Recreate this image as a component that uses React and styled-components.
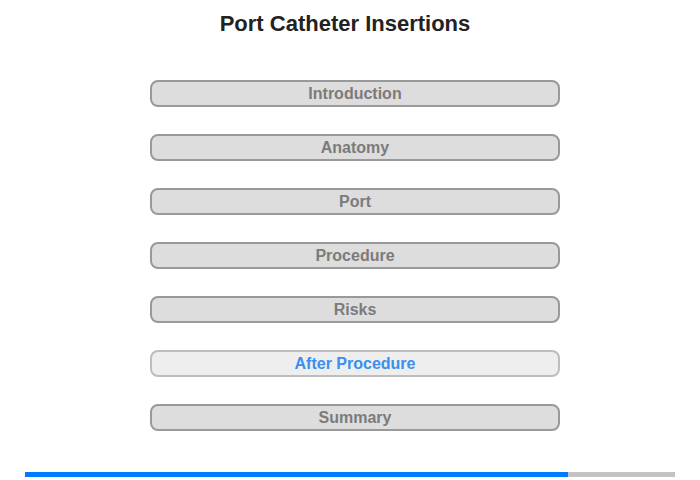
import React from "react";
import styled, { createGlobalStyle } from "styled-components";

const Global = createGlobalStyle`
  html, body { margin: 0; padding: 0; background: #fff; }
  body { font-family: "Liberation Sans", Arial, sans-serif; }
`;

const Page = styled.div`
  width: 700px;
  height: 480px;
  display: flex;
  flex-direction: column;
  box-sizing: border-box;
`;

const Title = styled.h1`
  margin: 0;
  padding-top: 11px;
  width: 690px;
  text-align: center;
  font-size: 22px;
  line-height: 26px;
  font-weight: bold;
  color: #222;
`;

const Menu = styled.nav`
  margin: 43px 0 0 150px;
  width: 410px;
  display: flex;
  flex-direction: column;
  gap: 27px;
`;

const Item = styled.div`
  box-sizing: border-box;
  height: 27px;
  border: 2px solid ${(p) => (p.$active ? "#bdbdbd" : "#999")};
  border-radius: 8px;
  background: ${(p) => (p.$active ? "#eeeeee" : "#dddddd")};
  color: ${(p) => (p.$active ? "#3a8ff0" : "#7b7b7b")};
  font-size: 16px;
  font-weight: bold;
  display: flex;
  align-items: center;
  justify-content: center;
  line-height: 1;
`;

const Progress = styled.div`
  margin: 41px 0 0 25px;
  width: 650px;
  height: 5px;
  background: #c3c3c3;
  display: flex;
`;

const Fill = styled.div`
  height: 100%;
  background: #007bff;
`;

const items = [
  "Introduction",
  "Anatomy",
  "Port",
  "Procedure",
  "Risks",
  "After Procedure",
  "Summary",
];

export default function App() {
  return (
    <Page>
      <Global />
      <Title>Port Catheter Insertions</Title>
      <Menu>
        {items.map((t) => (
          <Item key={t} $active={t === "After Procedure"}>
            {t}
          </Item>
        ))}
      </Menu>
      <Progress>
        <Fill style={{ width: "543px" }} />
      </Progress>
    </Page>
  );
}
